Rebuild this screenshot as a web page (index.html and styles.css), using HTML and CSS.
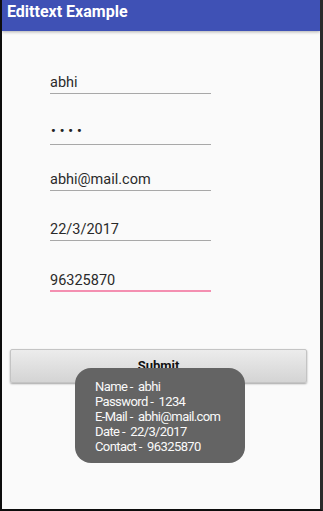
FILE: index.html
```html
<!DOCTYPE html>
<html>
<head>
<meta charset="utf-8">
<link rel="stylesheet" href="styles.css">
</head>
<body>
<div class="screen">
  <header class="appbar">Edittext Example</header>
  <main class="form">
    <div class="field field-first"><span class="value">abhi</span></div>
    <div class="field field-pass"><span class="dots">••••</span></div>
    <div class="field field-short"><span class="value">abhi@mail.com</span></div>
    <div class="field"><span class="value">22/3/2017</span></div>
    <div class="field field-focus"><span class="value">96325870</span></div>
    <div class="button-row"><button class="submit">Submit</button></div>
  </main>
  <div class="toast">
    <div>Name -&nbsp; abhi</div>
    <div>Password -&nbsp; 1234</div>
    <div>E-Mail -&nbsp; abhi@mail.com</div>
    <div>Date -&nbsp; 22/3/2017</div>
    <div>Contact -&nbsp; 96325870</div>
  </div>
</div>
</body>
</html>
```
FILE: styles.css
```css
html, body {
  margin: 0;
  padding: 0;
  background: #111;
}
.screen {
  position: relative;
  width: 323px;
  height: 511px;
  box-sizing: border-box;
  border-left: 2px solid #0d0d0d;
  border-right: 3px solid #2a2a2a;
  border-bottom: 2px solid #0d0d0d;
  background: #fafafa;
  font-family: Roboto, "Noto Sans", sans-serif;
  overflow: hidden;
}
.appbar {
  height: 31px;
  background: #3f51b5;
  color: #fff;
  font-size: 16px;
  font-weight: 700;
  line-height: 23px;
  padding-left: 5px;
  box-shadow: 0 1px 3px rgba(0,0,0,0.3);
  position: relative;
}
.form {
  padding-left: 48px;
}
.field {
  width: 161px;
  height: 50px;
  box-sizing: border-box;
  border-bottom: 1px solid #a8a8a8;
  display: flex;
  align-items: flex-end;
  padding-bottom: 2px;
  color: #2a2a2a;
  font-size: 14.5px;
}
.field-first {
  margin-top: 13px;
}
.field-pass {
  height: 51px;
}
.field-short {
  height: 46px;
}
.field-focus {
  border-bottom: 2px solid #f48fb1;
  height: 51px;
  padding-bottom: 1px;
}
.dots {
  font-size: 13px;
  font-weight: 700;
  letter-spacing: 4px;
  margin-left: 1px;
  padding-bottom: 4px;
  color: #222;
}
.button-row {
  margin-left: -40px;
  margin-top: 57px;
}
.submit {
  width: 297px;
  height: 34px;
  border: 1px solid #c4c4c4;
  border-radius: 2px;
  background: linear-gradient(#ececec, #d4d4d4);
  box-shadow: 0 1px 2px rgba(0,0,0,0.35);
  font-family: Roboto, "Noto Sans", sans-serif;
  font-size: 13px;
  font-weight: 700;
  color: #111;
  padding: 0 0 2px 0;
}
.toast {
  position: absolute;
  left: 73px;
  top: 368px;
  width: 170px;
  height: 95px;
  box-sizing: border-box;
  padding: 11px 0 0 20px;
  background: #646464;
  border-radius: 16px;
  color: #fafafa;
  font-size: 13px;
  line-height: 15px;
  letter-spacing: -0.6px;
}
```
